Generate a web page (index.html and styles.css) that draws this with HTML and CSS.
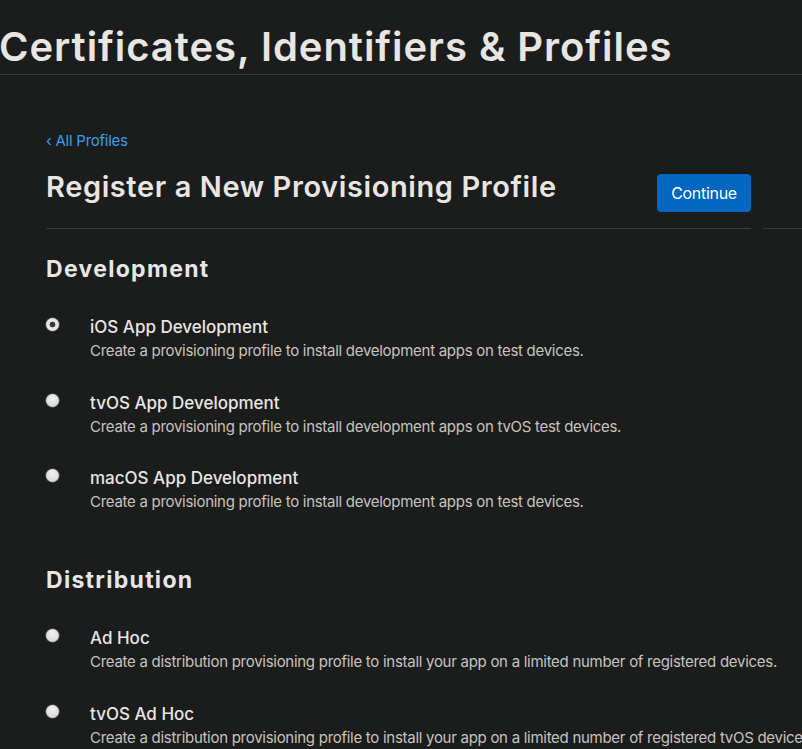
FILE: index.html
```html
<!DOCTYPE html>
<html lang="en">
<head>
<meta charset="utf-8">
<title>Register a New Provisioning Profile</title>
<link rel="stylesheet" href="styles.css">
</head>
<body>
<header class="site-header">
  <h1 class="site-title">Certificates, Identifiers &amp; Profiles</h1>
</header>
<main class="page">
  <section class="topbar">
    <a class="back-link" href="#"><span class="chev">‹</span> All Profiles</a>
    <div class="title-row">
      <h2 class="page-title">Register a New Provisioning Profile</h2>
      <button class="btn-continue" type="button">Continue</button>
    </div>
  </section>
  <div class="topbar-aside"></div>

  <section class="options">
    <h3 class="group-title">Development</h3>
    <ul class="option-list">
      <li class="option">
        <span class="radio radio-checked"></span>
        <div class="option-text">
          <div class="option-name">iOS App Development</div>
          <div class="option-desc">Create a provisioning profile to install development apps on test devices.</div>
        </div>
      </li>
      <li class="option">
        <span class="radio"></span>
        <div class="option-text">
          <div class="option-name">tvOS App Development</div>
          <div class="option-desc">Create a provisioning profile to install development apps on tvOS test devices.</div>
        </div>
      </li>
      <li class="option">
        <span class="radio"></span>
        <div class="option-text">
          <div class="option-name">macOS App Development</div>
          <div class="option-desc">Create a provisioning profile to install development apps on test devices.</div>
        </div>
      </li>
    </ul>

    <h3 class="group-title group-dist">Distribution</h3>
    <ul class="option-list">
      <li class="option">
        <span class="radio"></span>
        <div class="option-text">
          <div class="option-name">Ad Hoc</div>
          <div class="option-desc">Create a distribution provisioning profile to install your app on a limited number of registered devices.</div>
        </div>
      </li>
      <li class="option">
        <span class="radio"></span>
        <div class="option-text">
          <div class="option-name">tvOS Ad Hoc</div>
          <div class="option-desc">Create a distribution provisioning profile to install your app on a limited number of registered tvOS devices.</div>
        </div>
      </li>
    </ul>
  </section>
</main>
</body>
</html>
```

FILE: styles.css
```css
html, body {
  margin: 0;
  padding: 0;
  background: #1b1c1c;
  overflow: hidden;
}
body {
  font-family: Inter, "Liberation Sans", sans-serif;
  color: #e8e6e3;
  width: 802px;
  height: 749px;
}
.site-header {
  padding: 24px 0 4px 0;
  border-bottom: 1px solid #383b3d;
}
.site-title {
  margin: 0 0 0 -1px;
  font-size: 40px;
  line-height: 46px;
  font-weight: 600;
  letter-spacing: 0.95px;
  white-space: nowrap;
}
.page {
  display: grid;
  grid-template-columns: 705px 1fr;
  column-gap: 12px;
  padding-left: 46px;
}
.topbar {
  padding-top: 56px;
  padding-bottom: 16px;
  border-bottom: 1px solid #383b3d;
}
.topbar-aside {
  border-bottom: 1px solid #383b3d;
}
.back-link {
  display: block;
  font-size: 15px;
  line-height: 20px;
  letter-spacing: -0.25px;
  color: #3d9ee9;
  text-decoration: none;
}
.page-title {
  margin: 0;
  font-size: 29px;
  line-height: 34px;
  font-weight: 600;
  letter-spacing: 0.6px;
}
.title-row {
  margin-top: 19px;
  display: flex;
  justify-content: space-between;
  align-items: flex-start;
}
.btn-continue {
  margin-top: 4px;
  width: 94px;
  height: 38px;
  border: 0;
  border-radius: 4px;
  background: #0066c0;
  color: #fff;
  font-family: inherit;
  font-size: 16px;
  letter-spacing: -0.3px;
}
.options {
  grid-column: 1 / -1;
  padding-top: 26px;
}
.group-title {
  margin: 0;
  font-size: 23px;
  line-height: 28px;
  font-weight: 700;
  letter-spacing: 1.3px;
}
.group-dist {
  margin-top: 54px;
}
.option-list {
  list-style: none;
  margin: 32px 0 0 0;
  padding: 0;
  display: flex;
  flex-direction: column;
  row-gap: 29.5px;
}
.option {
  display: flex;
  align-items: flex-start;
  column-gap: 31px;
}
.radio {
  flex: none;
  box-sizing: border-box;
  width: 13px;
  height: 13px;
  margin-top: 3px;
  border-radius: 50%;
  background: radial-gradient(circle at 50% 35%, #f2f2f2, #d0d0d0);
  box-shadow: 0 0 0 0.5px #777;
}
.radio-checked {
  background: radial-gradient(circle, #3a3a3a 0 2.6px, #e6e6e6 3.2px);
}
.option-text {
  white-space: nowrap;
}
.option-name {
  font-size: 17px;
  line-height: 24px;
  font-weight: 500;
  color: #e8e6e3;
}
.option-desc {
  margin-top: 2px;
  font-size: 15px;
  line-height: 20px;
  letter-spacing: -0.28px;
  color: #c8c4bd;
}
```
